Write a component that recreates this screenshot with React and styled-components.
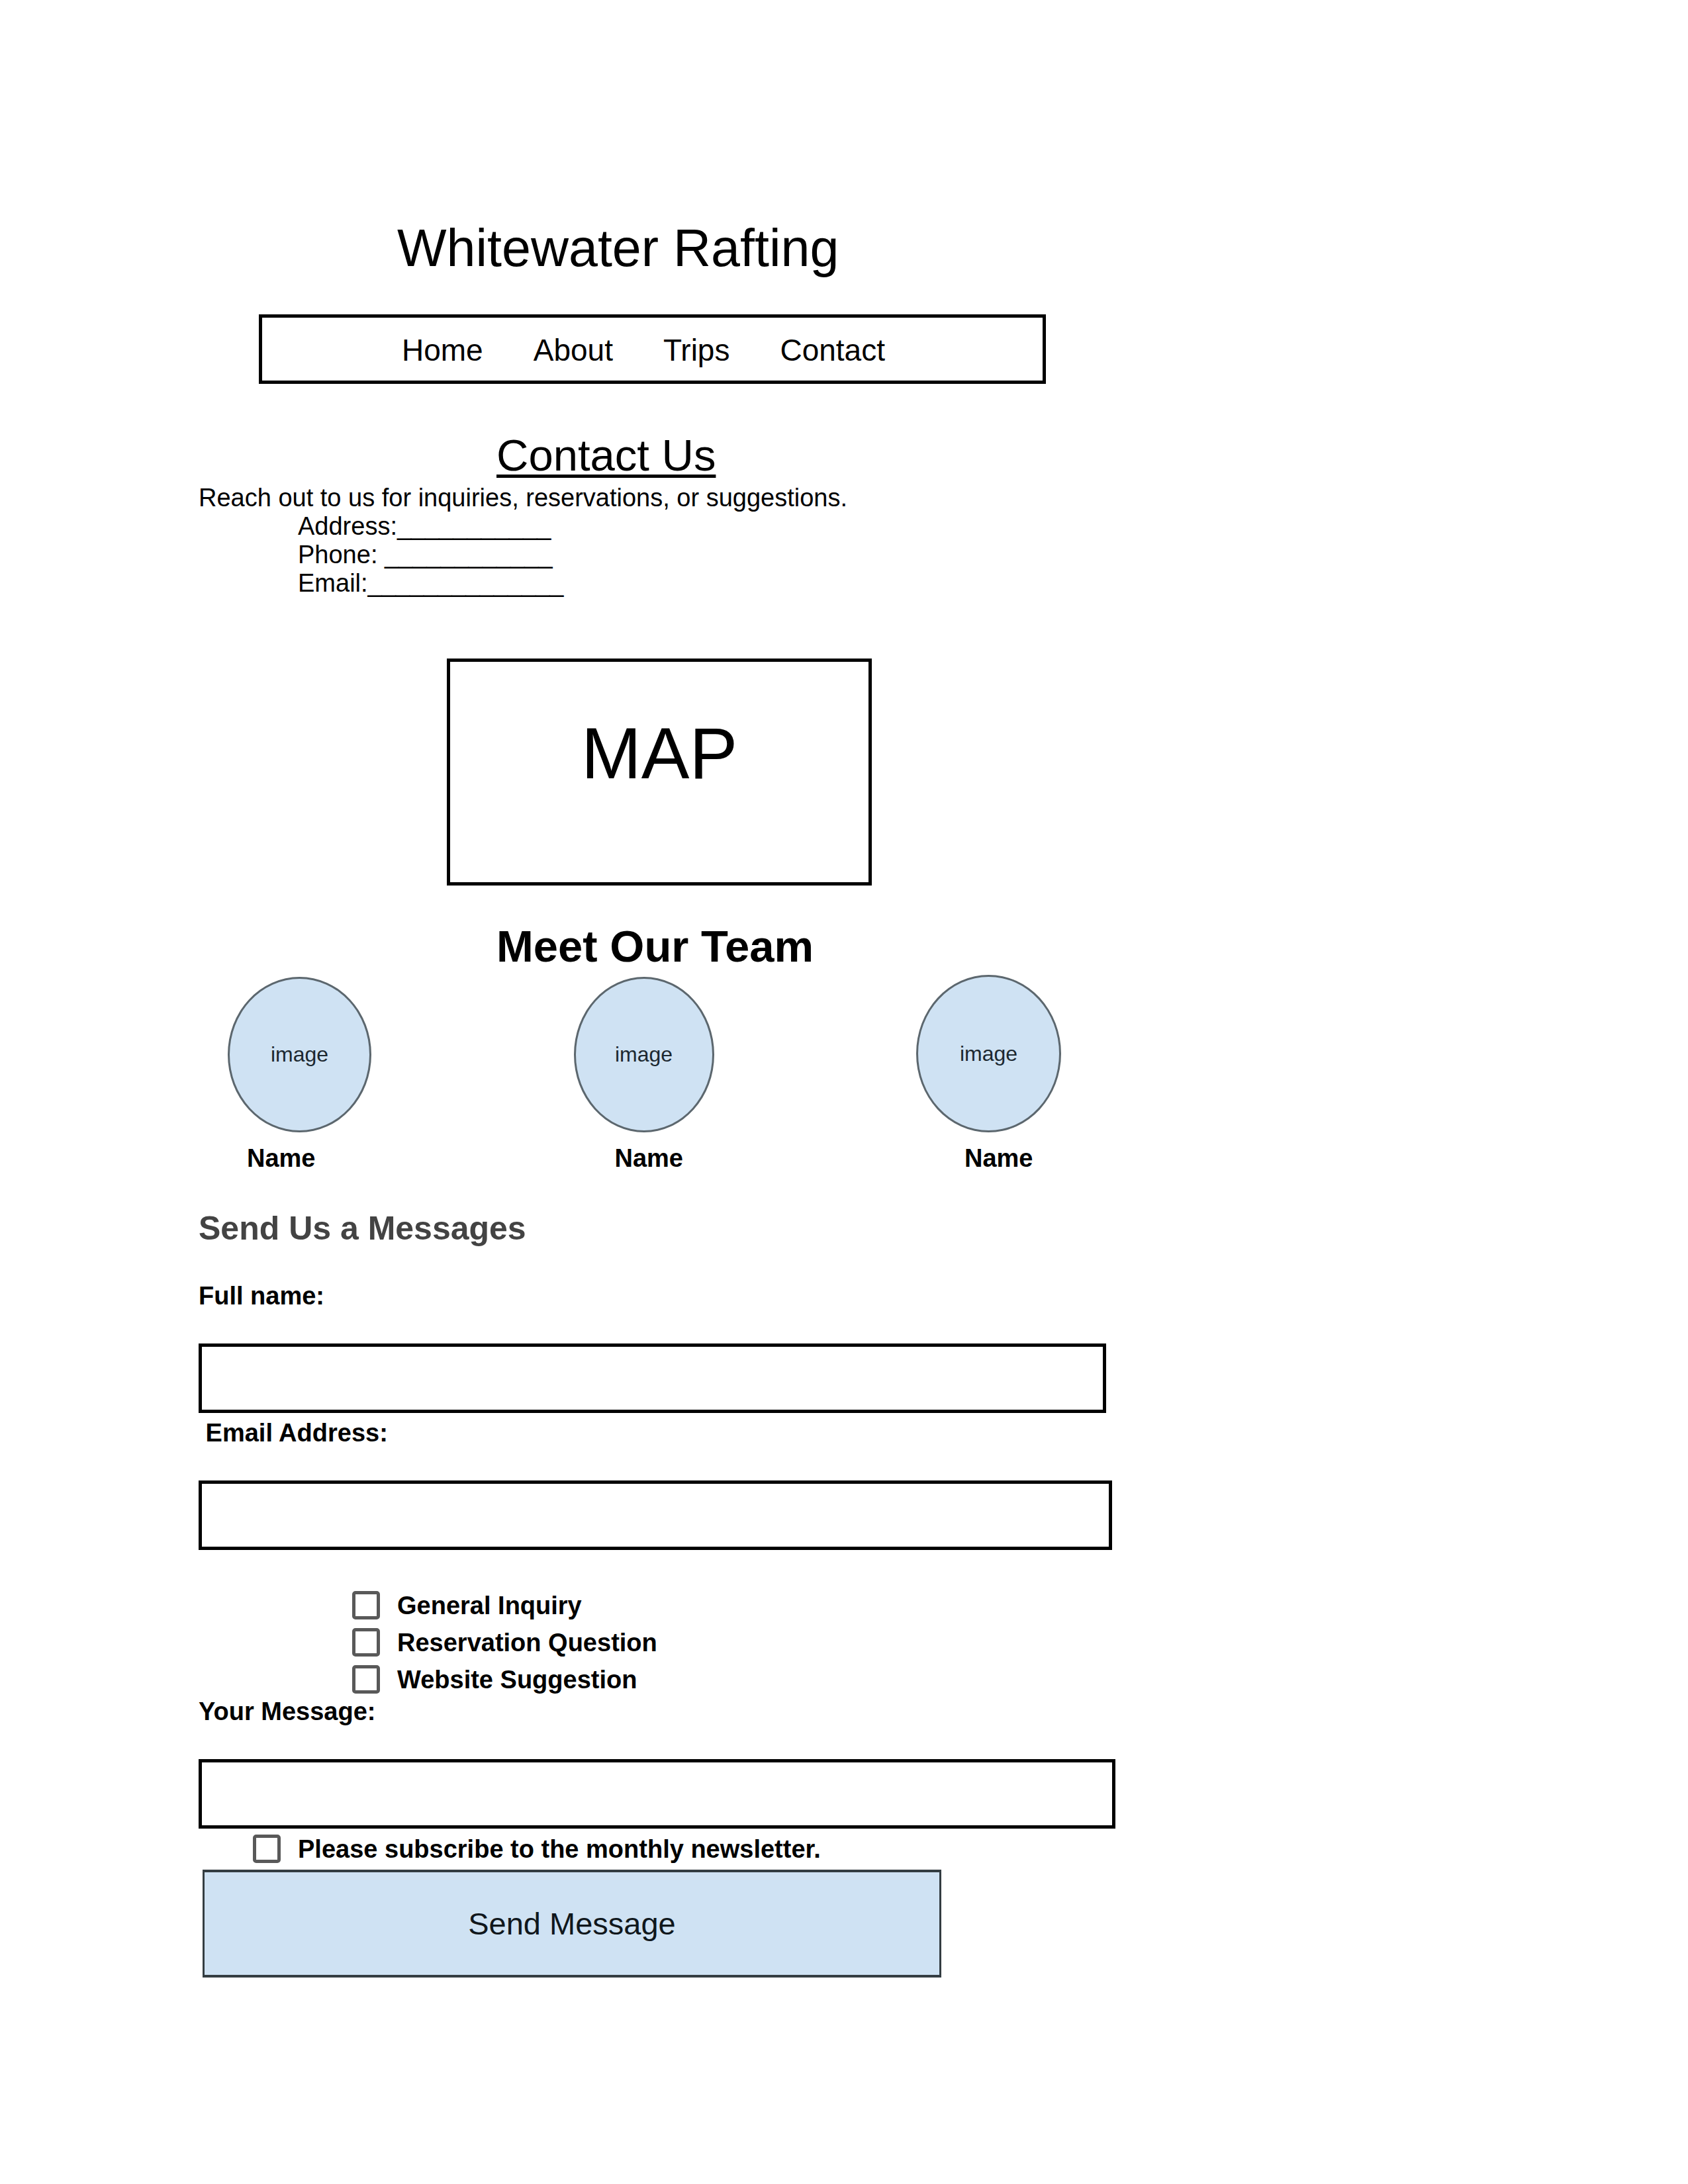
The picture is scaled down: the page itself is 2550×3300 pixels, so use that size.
import React from "react";
import styled, { createGlobalStyle } from "styled-components";

const GlobalStyle = createGlobalStyle`
  *, *::before, *::after { box-sizing: border-box; }
  body {
    margin: 0;
    background: #fff;
    color: #000;
    font-family: "Liberation Sans", Arial, sans-serif;
    font-size: 38px;
    line-height: 43px;
  }
`;

const Page = styled.main`
  max-width: 1985px;
  padding: 330px 300px 312px;
`;

const SiteTitle = styled.h1`
  margin: 0 0 55px 300px;
  font-size: 79px;
  line-height: 90px;
  font-weight: 400;
`;

const NavBar = styled.nav`
  display: flex;
  flex-wrap: wrap;
  gap: 0 76px;
  margin: 0 105px 67px 91px;
  padding: 23px 20px 20px 211px;
  border: 5px solid #000;
`;

const NavLink = styled.a`
  color: inherit;
  font-size: 46px;
  line-height: 52px;
  text-decoration: none;
`;

const SectionTitle = styled.h2`
  margin: 0 0 2px 450px;
  font-size: 67px;
  line-height: 82px;
  font-weight: ${(p) => (p.$underlined ? 400 : 700)};
  text-decoration: ${(p) => (p.$underlined ? "underline" : "none")};
  text-decoration-thickness: 5px;
  text-underline-offset: 6px;
  text-decoration-skip-ink: none;
`;

const Text = styled.p`
  margin: 0;
`;

const ContactList = styled.address`
  display: flex;
  flex-direction: column;
  margin-left: 150px;
  font-style: normal;
`;

const MapBox = styled.div`
  width: 642px;
  max-width: 100%;
  min-height: 343px;
  margin: 92px 0 51px 375px;
  padding-top: 76px;
  border: 5px solid #000;
  font-size: 109px;
  line-height: 124px;
  text-align: center;
`;

const Team = styled.div`
  display: flex;
  justify-content: space-between;
  align-items: flex-end;
  padding: 0 82px 0 44px;
`;

const Member = styled.figure`
  margin: 0;
`;

const Portrait = styled.div`
  display: flex;
  align-items: center;
  justify-content: center;
  width: ${(p) => p.$width}px;
  height: ${(p) => p.$height}px;
  border: 3px solid #5c676e;
  border-radius: 50%;
  background: #cfe2f3;
  color: #1c2830;
  font-size: 32px;
`;

const MemberName = styled.figcaption`
  margin-top: 18px;
  padding-left: ${(p) => p.$indent}px;
  font-weight: 700;
`;

const FormTitle = styled.h3`
  margin: 55px 0 52px;
  color: #434343;
  font-size: 50px;
  line-height: 58px;
`;

const Form = styled.form`
  display: flex;
  flex-direction: column;
  align-items: flex-start;
  font-weight: 700;
`;

const FieldLabel = styled.label`
  margin-bottom: 50px;
  white-space: pre;
`;

const TextField = styled.input`
  display: block;
  width: calc(100% - ${(p) => p.$inset || 0}px);
  height: 105px;
  margin: 0 0 9px;
  padding: 20px;
  border: 5px solid #000;
  border-radius: 0;
  background: #fff;
  font: inherit;
  font-weight: 400;
  outline: none;
  resize: none;
`;

const Choices = styled.div`
  display: flex;
  flex-direction: column;
  gap: 11px;
  margin: 53px 0 4px 232px;
`;

const Choice = styled.label`
  display: flex;
  align-items: flex-start;
  gap: 26px;
  line-height: 45px;
`;

const Newsletter = styled.div`
  margin: 0 0 8px 82px;
`;

const Checkbox = styled.input`
  appearance: none;
  flex: none;
  width: 42px;
  height: 43px;
  margin: 0;
  border: 5px solid #595959;
  border-radius: 5px;
  background: #fff;

  &:checked {
    background: #595959;
    box-shadow: inset 0 0 0 5px #fff;
  }
`;

const SubmitButton = styled.button`
  width: calc(100% - 269px);
  height: 163px;
  margin: 0 0 0 6px;
  padding: 0;
  border: solid #343d42;
  border-width: 4px 3px;
  background: #cfe2f3;
  color: #10171c;
  font-family: inherit;
  font-size: 47px;
  font-weight: 400;
`;

const links = ["Home", "About", "Trips", "Contact"];

const team = [
  { id: 1, width: 217, height: 235, indent: 29 },
  { id: 2, width: 212, height: 235, indent: 62 },
  { id: 3, width: 219, height: 238, indent: 73 },
];

const topics = ["General Inquiry", "Reservation Question", "Website Suggestion"];

export default function App() {
  return (
    <>
      <GlobalStyle />
      <Page>
        <SiteTitle>Whitewater Rafting</SiteTitle>
        <NavBar>
          {links.map((link) => (
            <NavLink key={link} href={`#${link.toLowerCase()}`}>
              {link}
            </NavLink>
          ))}
        </NavBar>

        <SectionTitle $underlined>Contact Us</SectionTitle>
        <Text>Reach out to us for inquiries, reservations, or suggestions.</Text>
        <ContactList>
          <span>Address:___________</span>
          <span>Phone: ____________</span>
          <span>Email:______________</span>
        </ContactList>

        <MapBox>MAP</MapBox>

        <SectionTitle>Meet Our Team</SectionTitle>
        <Team>
          {team.map((member) => (
            <Member key={member.id}>
              <Portrait $width={member.width} $height={member.height}>
                image
              </Portrait>
              <MemberName $indent={member.indent}>Name</MemberName>
            </Member>
          ))}
        </Team>

        <FormTitle>Send Us a Messages</FormTitle>
        <Form onSubmit={(event) => event.preventDefault()}>
          <FieldLabel htmlFor="full-name">Full name:</FieldLabel>
          <TextField id="full-name" type="text" $inset={14} />
          <FieldLabel htmlFor="email">{" Email Address:"}</FieldLabel>
          <TextField id="email" type="email" $inset={5} />
          <Choices>
            {topics.map((topic) => (
              <Choice key={topic}>
                <Checkbox type="checkbox" name="topic" value={topic} />
                {topic}
              </Choice>
            ))}
          </Choices>
          <FieldLabel htmlFor="message">Your Message:</FieldLabel>
          <TextField as="textarea" id="message" />
          <Newsletter>
            <Choice>
              <Checkbox type="checkbox" name="newsletter" />
              Please subscribe to the monthly newsletter.
            </Choice>
          </Newsletter>
          <SubmitButton type="submit">Send Message</SubmitButton>
        </Form>
      </Page>
    </>
  );
}
